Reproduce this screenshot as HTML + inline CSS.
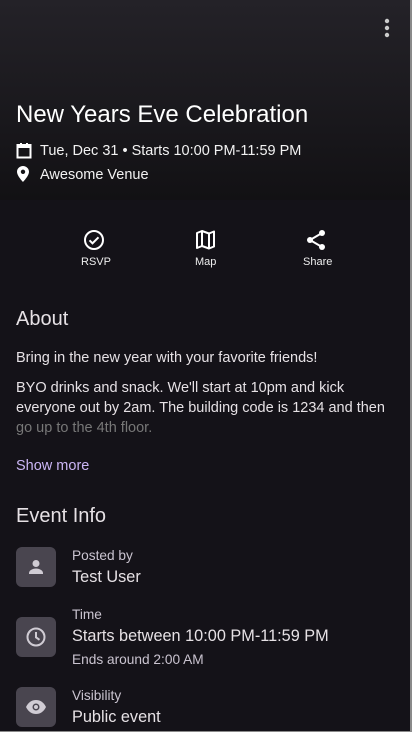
<!DOCTYPE html>
<html><head><meta charset="utf-8"><style>
*{margin:0;padding:0;box-sizing:border-box}
body{width:412px;height:732px;overflow:hidden;background:#141218;font-family:"Liberation Sans",sans-serif;color:#e6e1e5;position:relative}
.hdr{position:absolute;left:0;top:0;width:412px;height:200px;background:linear-gradient(#242228,#121114)}
.a{position:absolute;white-space:nowrap}
.frame{position:absolute;right:0;top:0;width:2px;height:732px;background:#8a8a8a}
.frameb{position:absolute;left:0;bottom:0;width:412px;height:1px;background:#8a8a8a}
.box{position:absolute;left:16px;width:40px;height:40px;border-radius:6px;background:#49454f;display:flex;align-items:center;justify-content:center}
</style></head><body>
<div class="hdr"></div>
<svg class="a" style="left:380px;top:16px" width="14" height="24" viewBox="0 0 14 24"><circle cx="7" cy="5" r="2.2" fill="#ccc"/><circle cx="7" cy="12" r="2.2" fill="#ccc"/><circle cx="7" cy="19" r="2.2" fill="#ccc"/></svg>
<div class="a" style="left:16px;top:101px;font-size:24px;color:#fff">New Years Eve Celebration</div>
<svg class="a" style="left:16px;top:142px" width="16" height="17" viewBox="0 0 16 17"><rect x="1.5" y="3" width="13" height="12.5" fill="none" stroke="#fff" stroke-width="2"/><rect x="1.5" y="3" width="13" height="3" fill="#fff"/><rect x="4" y="1" width="2" height="3" fill="#fff"/><rect x="10" y="1" width="2" height="3" fill="#fff"/></svg>
<div class="a" style="left:40px;top:143px;font-size:14.5px;color:#f2f2f2">Tue, Dec 31 • Starts 10:00 PM-11:59 PM</div>
<svg class="a" style="left:17px;top:166px" width="12" height="16" viewBox="0 0 12 16"><path d="M6 0C2.7 0 0 2.6 0 5.8 0 10 6 16 6 16s6-6 6-10.2C12 2.6 9.3 0 6 0zm0 8a2.2 2.2 0 110-4.4A2.2 2.2 0 016 8z" fill="#fff"/></svg>
<div class="a" style="left:40px;top:167px;font-size:14.5px;color:#f2f2f2">Awesome Venue</div>
<svg class="a" style="left:83px;top:229px" width="22" height="22" viewBox="0 0 22 22"><circle cx="11" cy="11" r="9" fill="none" stroke="#fff" stroke-width="2"/><path d="M6.5 11.3l3 3 6-6" fill="none" stroke="#fff" stroke-width="2"/></svg>
<div class="a" style="left:81px;top:256px;font-size:11px;color:#eee">RSVP</div>
<svg class="a" style="left:195px;top:230px" width="22" height="20" viewBox="0 0 22 20"><path d="M2 3l5-2 7 2.5 5-2v15l-5 2-7-2.5-5 2z M7 1v15.5 M14 3.5v15.5" fill="none" stroke="#fff" stroke-width="2" stroke-linejoin="round"/></svg>
<div class="a" style="left:195px;top:256px;font-size:11px;color:#eee">Map</div>
<svg class="a" style="left:305px;top:228px" width="22" height="24" viewBox="0 0 22 24"><circle cx="17" cy="5" r="3" fill="#fff"/><circle cx="5" cy="12" r="3" fill="#fff"/><circle cx="17" cy="19" r="3" fill="#fff"/><path d="M17 5L5 12l12 7" fill="none" stroke="#fff" stroke-width="2"/></svg>
<div class="a" style="left:303px;top:256px;font-size:11px;color:#eee">Share</div>
<div class="a" style="left:16px;top:308px;font-size:20px">About</div>
<div class="a" style="left:16px;top:350px;font-size:14.5px">Bring in the new year with your favorite friends!</div>
<div class="a" style="left:16px;top:378px;font-size:14.5px;line-height:20px">BYO drinks and snack. We'll start at 10pm and kick<br>everyone out by 2am. The building code is 1234 and then<br><span style="color:#777">go up to the 4th floor.</span></div>
<div class="a" style="left:16px;top:458px;font-size:14.5px;color:#cbb6f5">Show more</div>
<div class="a" style="left:16px;top:505px;font-size:20px">Event Info</div>
<div class="box" style="top:547px"><svg width="20" height="20" viewBox="0 0 20 20"><circle cx="10" cy="6.5" r="3.5" fill="#d0ccd4"/><path d="M3 16c0-3 4.5-4.5 7-4.5s7 1.5 7 4.5v1H3z" fill="#d0ccd4"/></svg></div>
<div class="a" style="left:72px;top:548px;font-size:13.7px;color:#cac4d0">Posted by</div>
<div class="a" style="left:72px;top:568px;font-size:16.3px">Test User</div>
<div class="box" style="top:617px"><svg width="22" height="22" viewBox="0 0 22 22"><circle cx="11" cy="11" r="8.5" fill="none" stroke="#d0ccd4" stroke-width="2"/><path d="M11 6v5.3l3.5 2.5" fill="none" stroke="#d0ccd4" stroke-width="2"/></svg></div>
<div class="a" style="left:72px;top:607px;font-size:13.7px;color:#cac4d0">Time</div>
<div class="a" style="left:72px;top:627px;font-size:16.3px">Starts between 10:00 PM-11:59 PM</div>
<div class="a" style="left:72px;top:652px;font-size:13.7px;color:#cac4d0">Ends around 2:00 AM</div>
<div class="box" style="top:687px"><svg width="22" height="16" viewBox="0 0 22 16"><path d="M1 8C3.5 3 7 1 11 1s7.5 2 10 7c-2.5 5-6 7-10 7S3.5 13 1 8z" fill="#d0ccd4"/><circle cx="11" cy="8" r="3.5" fill="#49454f"/><circle cx="11" cy="8" r="2" fill="#d0ccd4"/></svg></div>
<div class="a" style="left:72px;top:688px;font-size:13.7px;color:#cac4d0">Visibility</div>
<div class="a" style="left:72px;top:708px;font-size:16.3px">Public event</div>
<div class="frame"></div><div class="frameb"></div>
</body></html>
